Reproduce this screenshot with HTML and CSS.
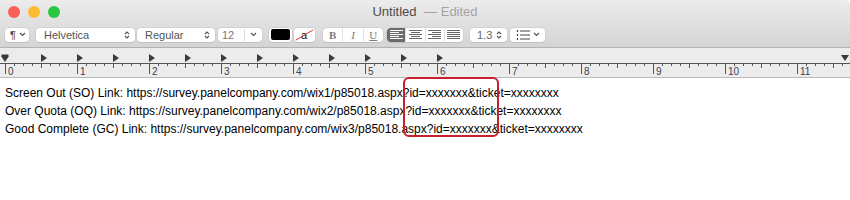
FILE: index.html
```html
<!DOCTYPE html>
<html lang="en">
<head>
  <meta charset="UTF-8">
  <title>Untitled — Edited</title>
  <link rel="stylesheet" href="styles.css">
</head>
<body>
  <div class="window">
    <header class="chrome">
      <div class="titlebar">
        <div class="lights">
          <span class="light red"></span>
          <span class="light yellow"></span>
          <span class="light green"></span>
        </div>
        <div class="title">Untitled <span class="edited">— Edited</span></div>
      </div>

      <div class="toolbar">
        <div class="ctl para">¶ <svg width="7" height="5"><path d="M1 1l2.5 2.5L6 1" stroke="#555" fill="none" stroke-width="1.2"/></svg></div>
        <div class="ctl popup font">Helvetica
          <svg width="6" height="10"><path d="M1 4L3 2l2 2M1 6l2 2 2-2" stroke="#555" fill="none" stroke-width="1.1"/></svg>
        </div>
        <div class="ctl popup style">Regular
          <svg width="6" height="10"><path d="M1 4L3 2l2 2M1 6l2 2 2-2" stroke="#555" fill="none" stroke-width="1.1"/></svg>
        </div>
        <div class="ctl combo">
          <span class="combo-val">12</span>
          <span class="combo-btn"><svg width="7" height="5"><path d="M1 1l2.5 2.5L6 1" stroke="#555" fill="none" stroke-width="1.2"/></svg></span>
        </div>
        <div class="ctl well color"><span class="swatch"></span></div>
        <div class="ctl well strike">
          <svg width="19" height="12"><text x="6" y="10" font-family="Liberation Sans, sans-serif" font-size="11" fill="#111">a</text><path d="M1 11L18 1" stroke="#e0322e" stroke-width="1"/></svg>
        </div>
        <div class="ctl seg biu">
          <span class="seg-item b">B</span>
          <span class="seg-item i">I</span>
          <span class="seg-item u">U</span>
        </div>
        <div class="ctl seg align">
          <span class="seg-item on">
            <svg width="13" height="10"><path d="M0 .5h13M0 2.5h9M0 4.5h13M0 6.5h9M0 8.5h13" stroke="#fff"/></svg>
          </span>
          <span class="seg-item">
            <svg width="13" height="10"><path d="M0 .5h13M2 2.5h9M0 4.5h13M2 6.5h9M0 8.5h13" stroke="#666"/></svg>
          </span>
          <span class="seg-item">
            <svg width="13" height="10"><path d="M0 .5h13M4 2.5h9M0 4.5h13M4 6.5h9M0 8.5h13" stroke="#666"/></svg>
          </span>
          <span class="seg-item">
            <svg width="13" height="10"><path d="M0 .5h13M0 2.5h13M0 4.5h13M0 6.5h13M0 8.5h13" stroke="#666"/></svg>
          </span>
        </div>
        <div class="ctl popup spacing">1.3
          <svg width="6" height="10"><path d="M1 4L3 2l2 2M1 6l2 2 2-2" stroke="#555" fill="none" stroke-width="1.1"/></svg>
        </div>
        <div class="ctl popup list">
          <svg width="14" height="10"><path d="M1.5 0v2M1.5 4v2M1.5 8v2M4 1h10M4 5h10M4 9h10" stroke="#444" stroke-width="1.2"/></svg>
          <svg width="7" height="5"><path d="M1 1l2.5 2.5L6 1" stroke="#555" fill="none" stroke-width="1.2"/></svg>
        </div>
      </div>
    </header>

    <div class="ruler">
      <div class="tabs">
        <span class="indent"></span>
        <span class="tab"></span><span class="tab"></span><span class="tab"></span><span class="tab"></span>
        <span class="tab"></span><span class="tab"></span><span class="tab"></span><span class="tab"></span>
        <span class="tab"></span><span class="tab"></span><span class="tab"></span><span class="tab"></span>
        <span class="margin"></span>
      </div>
      <div class="scale">
        <span class="inch">0</span><span class="inch">1</span><span class="inch">2</span>
        <span class="inch">3</span><span class="inch">4</span><span class="inch">5</span>
        <span class="inch">6</span><span class="inch">7</span><span class="inch">8</span>
        <span class="inch">9</span><span class="inch">10</span><span class="inch">11</span>
      </div>
    </div>

    <div class="doc">
      <p>Screen Out (SO) Link: https://survey.panelcompany.com/wix1/p85018.aspx?id=xxxxxxx&amp;ticket=xxxxxxxx</p>
      <p>Over Quota (OQ) Link: https://survey.panelcompany.com/wix2/p85018.aspx?id=xxxxxxx&amp;ticket=xxxxxxxx</p>
      <p>Good Complete (GC) Link: https://survey.panelcompany.com/wix3/p85018.aspx?id=xxxxxxx&amp;ticket=xxxxxxxx</p>
      <div class="mark"></div>
    </div>
  </div>
</body>
</html>
```

FILE: styles.css
```css
body {
  margin: 0;
  background-color: #ffffff;
  font-family: "Liberation Sans", Arial, sans-serif;
}
.window {
  width: 850px;
  height: 200px;
  overflow: hidden;
  background-color: #ffffff;
}
.chrome {
  height: 47px;
  background: linear-gradient(#ececec, #d4d4d4);
  border-bottom: 1px solid #b3b3b3;
  border-top-right-radius: 5px;
}
.titlebar {
  height: 23px;
  display: flex;
  align-items: center;
  position: relative;
}
.lights {
  display: flex;
  gap: 8px;
  padding-left: 8px;
}
.light {
  width: 12px;
  height: 12px;
  border-radius: 50%;
}
.red { background-color: #fc5f57; border: 0 solid #e0443e; }
.yellow { background-color: #fdbc2e; }
.green { background-color: #28c840; }
.title {
  position: absolute;
  left: 0;
  right: 0;
  top: 4px;
  text-align: center;
  font-size: 13px;
  color: #4c4c4c;
}
.edited {
  color: #a3a3a3;
  margin-left: 4px;
}

.toolbar {
  display: flex;
  align-items: center;
  padding: 4px 0 0 5px;
  height: 15px;
}
.ctl {
  height: 14px;
  background-color: #ffffff;
  border-radius: 4px;
  box-shadow: 0 0 0 0.5px #c4c4c4, 0 1px 0 #bdbdbd;
  display: flex;
  align-items: center;
  font-size: 11px;
  color: #555;
  box-sizing: border-box;
}
.para {
  width: 24px;
  padding-left: 5px;
  gap: 3px;
  margin-right: 7px;
  color: #444;
}
.popup {
  justify-content: space-between;
  padding: 0 5px 0 8px;
}
.font { width: 99px; margin-right: 2px; }
.style { width: 78px; margin-right: 3px; }
.combo {
  width: 44px;
  margin-right: 7px;
}
.combo-val {
  width: 27px;
  padding-left: 4px;
  color: #777;
  border-right: 1px solid #dcdcdc;
  box-sizing: border-box;
}
.combo-btn {
  flex: 1;
  display: flex;
  justify-content: center;
}
.well {
  justify-content: center;
}
.color { width: 23px; margin-right: 2px; }
.swatch {
  width: 19px;
  height: 11px;
  background-color: #000;
  border-radius: 2px;
}
.strike { width: 21px; margin-right: 8px; }
.seg {
  overflow: hidden;
}
.seg-item {
  flex: 1;
  height: 100%;
  display: flex;
  align-items: center;
  justify-content: center;
  border-left: 1px solid #e2e2e2;
}
.seg-item:first-child {
  border-left: 0;
}
.biu {
  width: 60px;
  margin-right: 4px;
  font-family: "Liberation Serif", serif;
  font-size: 11px;
  color: #7a7a7a;
}
.b { font-weight: bold; }
.i { font-style: italic; }
.u { text-decoration: underline; }
.align {
  width: 76px;
  margin-right: 7px;
}
.align .on {
  background-color: #6b6b6b;
}
.spacing {
  width: 37px;
  margin-right: 3px;
  padding-left: 7px;
  color: #666;
}
.list {
  width: 35px;
  padding-left: 6px;
}

.ruler {
  height: 30px;
  background-color: #ececec;
  border-bottom: 1px solid #b8b8b8;
  box-sizing: border-box;
}
.tabs {
  display: flex;
  height: 15px;
  padding: 6px 0 0 1px;
  box-sizing: border-box;
}
.indent {
  width: 0;
  height: 0;
  border-left: 4px solid transparent;
  border-right: 4px solid transparent;
  border-top: 6px solid #3a3a3a;
  margin-top: 2px;
  margin-right: 32px;
  box-shadow: 0 -2px 0 -0.5px #3a3a3a;
}
.tab {
  width: 36px;
  height: 8px;
  flex: none;
  position: relative;
}
.tab::before {
  content: "";
  display: block;
  width: 0;
  height: 0;
  border-top: 4px solid transparent;
  border-bottom: 4px solid transparent;
  border-left: 6px solid #3a3a3a;
  margin-left: 0;
}
.margin {
  width: 0;
  height: 0;
  border-left: 4px solid transparent;
  border-right: 4px solid transparent;
  border-top: 6px solid #3a3a3a;
  margin-left: auto;
  margin-right: 1px;
  margin-top: 1px;
}
.scale {
  display: flex;
  padding-left: 5px;
  border-top: 1px solid #555;
  height: 14px;
  box-sizing: border-box;
}
.inch {
  width: 72px;
  flex: none;
  border-left: 1px solid #555;
  height: 10px;
  padding: 3px 0 0 2px;
  box-sizing: border-box;
  font-size: 10px;
  line-height: 10px;
  color: #3d4450;
  overflow: visible;
  background-image:
    linear-gradient(#555, #555),
    repeating-linear-gradient(90deg, transparent 0 8px, #555 8px 9px);
  background-size: 1px 4px, 100% 2px;
  background-position: 35px 0, 0 0;
  background-repeat: no-repeat, no-repeat;
}

.doc {
  position: relative;
  padding: 6px 0 0 5px;
  font-size: 12px;
  color: #000;
}
.doc p {
  margin: 0;
  line-height: 18px;
  white-space: nowrap;
}
.mark {
  position: absolute;
  left: 403px;
  top: -1px;
  width: 96px;
  height: 60px;
  border: 2px solid #c8202f;
  border-radius: 6px;
  box-sizing: border-box;
}
```
